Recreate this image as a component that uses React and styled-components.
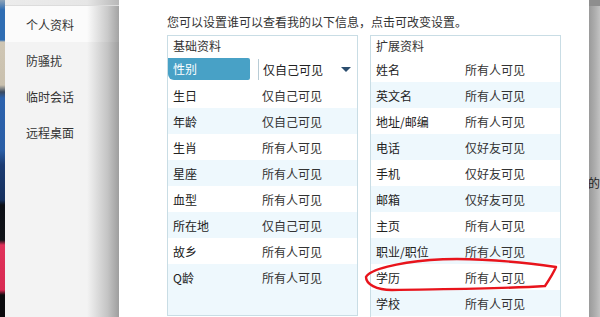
import React from "react";
import styled, { createGlobalStyle } from "styled-components";

const basicRows = [
    { label: "性别", value: "仅自己可见", selected: true },
    { label: "生日", value: "仅自己可见" },
    { label: "年龄", value: "仅自己可见", tinted: true },
    { label: "生肖", value: "所有人可见" },
    { label: "星座", value: "所有人可见", tinted: true },
    { label: "血型", value: "所有人可见" },
    { label: "所在地", value: "仅自己可见", tinted: true },
    { label: "故乡", value: "所有人可见" },
    { label: "Q龄", value: "所有人可见", tinted: true },
];

const extraRows = [
    { label: "姓名", value: "所有人可见" },
    { label: "英文名", value: "所有人可见", tinted: true },
    { label: "地址/邮编", value: "所有人可见" },
    { label: "电话", value: "仅好友可见", tinted: true },
    { label: "手机", value: "仅好友可见" },
    { label: "邮箱", value: "仅好友可见", tinted: true },
    { label: "主页", value: "所有人可见" },
    { label: "职业/职位", value: "所有人可见", tinted: true },
    { label: "学历", value: "所有人可见" },
    { label: "学校", value: "所有人可见", tinted: true },
];

const menu = ["个人资料", "防骚扰", "临时会话", "远程桌面"];

function App() {
    return (
        <>
            <GlobalStyle />
            <Screen>
                <Desktop />
                <Sidebar>
                    <SidebarTop />
                    {menu.map((item, i) => (
                        <MenuItem key={item} $active={i === 0}>
                            {item}
                        </MenuItem>
                    ))}
                </Sidebar>
                <Dialog>
                    <Intro>您可以设置谁可以查看我的以下信息，点击可改变设置。</Intro>
                    <Panels>
                        <Panel $closed>
                            <PanelHeader>基础资料</PanelHeader>
                            {basicRows.map((row) =>
                                row.selected ? (
                                    <Row key={row.label}>
                                        <SelectedLabel>{row.label}</SelectedLabel>
                                        <SelectBox>
                                            {row.value}
                                            <Caret />
                                        </SelectBox>
                                    </Row>
                                ) : (
                                    <Row key={row.label} $tinted={row.tinted}>
                                        <Label>{row.label}</Label>
                                        <Value>{row.value}</Value>
                                    </Row>
                                )
                            )}
                            <Filler />
                        </Panel>
                        <Panel>
                            <PanelHeader>扩展资料</PanelHeader>
                            {extraRows.map((row) => (
                                <Row key={row.label} $tinted={row.tinted}>
                                    <Label>{row.label}</Label>
                                    <Value>{row.value}</Value>
                                </Row>
                            ))}
                        </Panel>
                    </Panels>
                </Dialog>
                <BackWindow>
                    <BackText>的.</BackText>
                </BackWindow>
                <Marker viewBox="0 0 600 317" width="600" height="317">
                    <path
                        d="M366 277 C 370 269, 398 263, 430 260 C 470 257, 520 262, 556 267 C 553 274, 549 280, 545 286 C 500 289, 440 289, 392 290 C 376 290, 366 284, 366 277 Z"
                        fill="none"
                        stroke="#e8141c"
                        strokeWidth="2.4"
                        strokeLinejoin="round"
                    />
                </Marker>
            </Screen>
        </>
    );
}

export default App;

const GlobalStyle = createGlobalStyle`
    body {
        margin: 0;
        background: #ffffff;
        font-family: "Noto Sans CJK SC", "Noto Sans", sans-serif;
    }
`;

const Screen = styled.div`
    position: relative;
    display: flex;
    width: 600px;
    height: 317px;
    overflow: hidden;
    font-size: 12px;
    color: #222;
`;

const Desktop = styled.div`
    width: 5px;
    flex-shrink: 0;
    background: linear-gradient(
        to bottom,
        #8da3b8 0px,
        #2f6db3 10px,
        #2f6db3 40px,
        #cfc6b4 42px,
        #c9c0ae 85px,
        #3a4a60 92px,
        #2c62ad 98px,
        #2a5ea6 150px,
        #1b3b72 165px,
        #15305e 200px,
        #0c0f16 205px,
        #101318 240px,
        #e0325a 245px,
        #d82a52 290px,
        #0b0b0e 295px
    );
`;

const Sidebar = styled.div`
    width: 114px;
    flex-shrink: 0;
    display: flex;
    flex-direction: column;
    background: linear-gradient(to right, #f3f3f3 0, #f3f3f3 72%, #c4c4c4 90%, #9e9e9e 100%);
`;

const SidebarTop = styled.div`
    height: 5px;
    background: linear-gradient(to right, #ececec 0, #e6e6e6 72%, #b8b8b8 100%);
    border-bottom: 1px solid #dcdcdc;
`;

const MenuItem = styled.div`
    height: 36px;
    display: flex;
    align-items: center;
    padding-left: 21px;
    color: #333;
    background: ${(p) =>
        p.$active
            ? "linear-gradient(to right, #fbfbfb 0, #fbfbfb 72%, #cacaca 90%, #a3a3a3 100%)"
            : "transparent"};
`;

const Dialog = styled.div`
    width: 470px;
    flex-shrink: 0;
    background: #ffffff;
    padding-left: 48px;
    box-sizing: border-box;
`;

const Intro = styled.div`
    padding-top: 14px;
    height: 21px;
    line-height: 16px;
    color: #333;
`;

const Panels = styled.div`
    display: flex;
    gap: 12px;
    align-items: flex-start;
`;

const Panel = styled.div`
    width: 191px;
    height: ${(p) => (p.$closed ? "281px" : "300px")};
    box-sizing: border-box;
    border: 1px solid #c9dde5;
    border-bottom-width: ${(p) => (p.$closed ? "1px" : "0")};
    display: flex;
    flex-direction: column;
    background: #ffffff;
`;

const PanelHeader = styled.div`
    height: 20px;
    line-height: 20px;
    padding-left: 5px;
    color: #333;
`;

const Row = styled.div`
    height: 26px;
    flex-shrink: 0;
    display: grid;
    grid-template-columns: 89px 1fr;
    align-items: center;
    background: ${(p) => (p.$tinted ? "#eef8fd" : "#ffffff")};
`;

const Label = styled.div`
    padding-left: 5px;
    color: #222;
`;

const Value = styled.div`
    padding-left: 5px;
    color: #333;
`;

const SelectedLabel = styled.div`
    height: 22px;
    line-height: 22px;
    width: 82px;
    padding-left: 5px;
    box-sizing: border-box;
    background: #48a1c6;
    color: #ffffff;
    border-radius: 0 2px 2px 6px;
`;

const SelectBox = styled.div`
    position: relative;
    height: 21px;
    line-height: 21px;
    margin-left: 1px;
    padding-left: 4px;
    border-left: 1px solid #b8ccd6;
    color: #222;
`;

const Caret = styled.span`
    position: absolute;
    right: 6px;
    top: 8px;
    width: 0;
    height: 0;
    border-left: 5px solid transparent;
    border-right: 5px solid transparent;
    border-top: 5px solid #2b4d6e;
`;

const Filler = styled.div`
    flex: 1;
    background: #eef8fd;
`;

const BackWindow = styled.div`
    width: 11px;
    flex-shrink: 0;
    background: linear-gradient(to right, #9a9a9a 0, #b0b0b0 60%, #c2c2c2 100%);
    border-top: 6px solid #8e8e8e;
    box-sizing: border-box;
    overflow: hidden;
`;

const BackText = styled.div`
    margin-top: 168px;
    margin-left: -1px;
    color: #1e1e1e;
    white-space: nowrap;
    font-size: 12px;
`;

const Marker = styled.svg`
    position: absolute;
    left: 0;
    top: 0;
    pointer-events: none;
`;
